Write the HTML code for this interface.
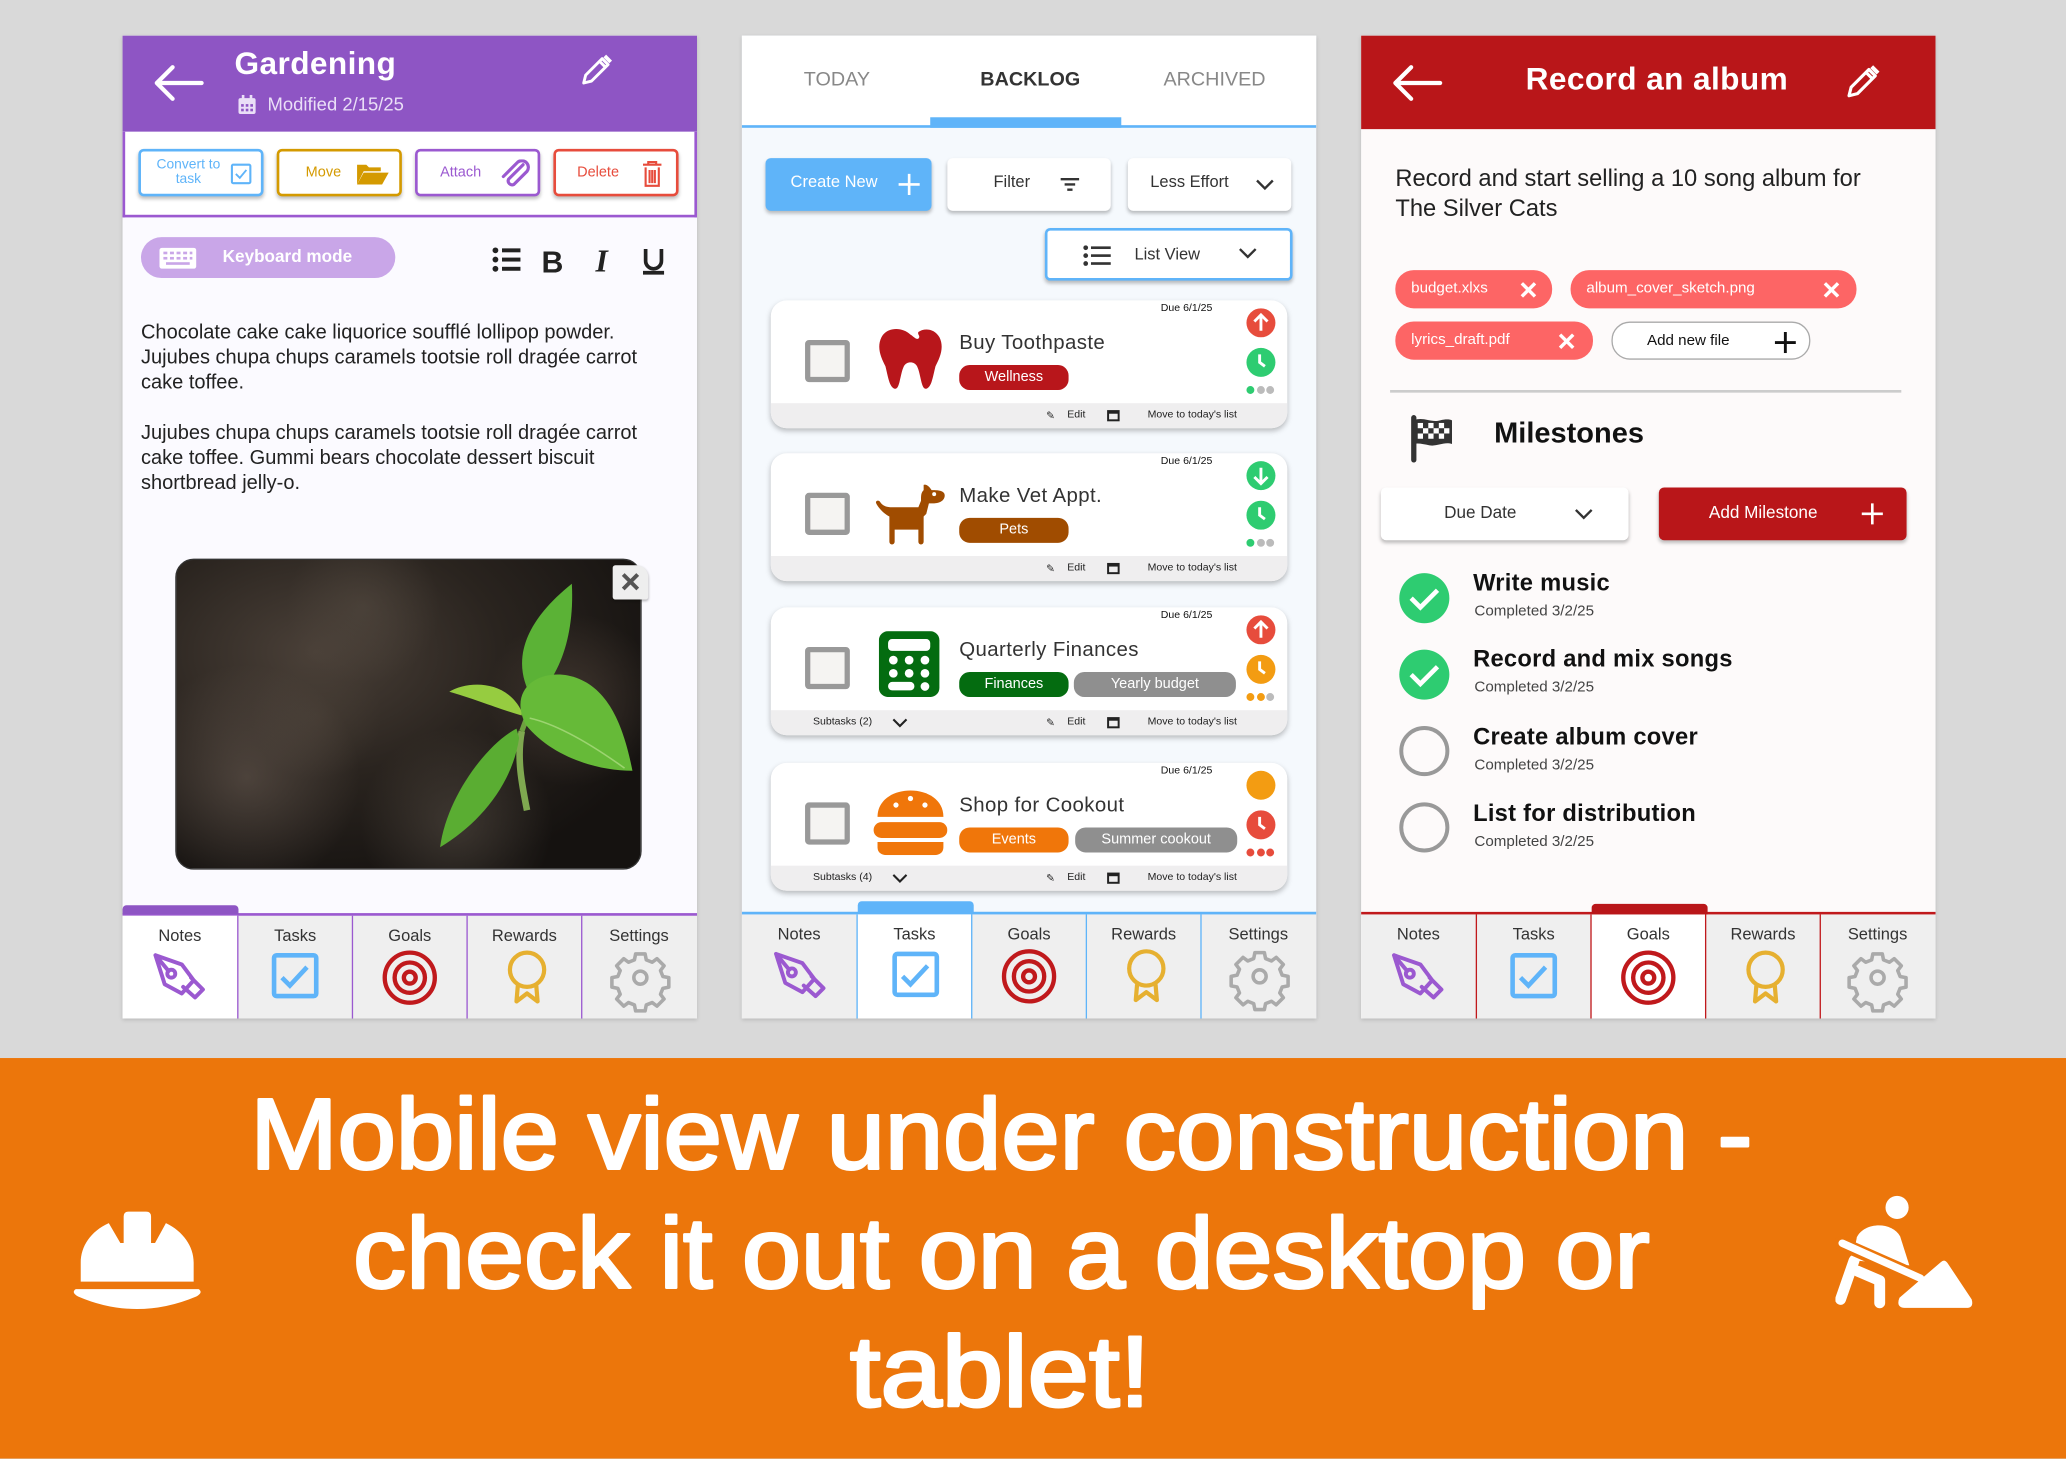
<!DOCTYPE html>
<html><head><meta charset="utf-8">
<style>
*{margin:0;padding:0;box-sizing:border-box}
html,body{width:2066px;height:1458px;overflow:hidden;background:#d9d9d9;font-family:"Liberation Sans",sans-serif}
#w{position:absolute;left:0;top:0;width:1568px;height:1107px;transform:scale(1.317602);transform-origin:0 0;background:#d9d9d9}
.a{position:absolute}
.panel{position:absolute;top:27px;width:436px;height:746px;overflow:hidden;box-shadow:0 1px 3px rgba(0,0,0,.15)}
.nav{position:absolute;left:0;top:666px;width:436px;height:80px;background:#efefef}
.tab{position:absolute;top:0;width:87px;height:80px;text-align:center;font-size:12.5px;color:#333}
.tab span{position:absolute;top:8px;left:0;width:100%}
.btn{position:absolute;background:#fff;border-radius:4px;box-shadow:0 2px 3px rgba(0,0,0,.25);font-size:12.5px;color:#333}
.card{position:absolute;left:22px;width:392px;height:97px;background:#fff;border-radius:12px;box-shadow:0 2px 4px rgba(0,0,0,.25);overflow:hidden}
.card .ft{position:absolute;left:0;top:78px;width:100%;height:19px;background:#efeeef;font-size:8px;color:#222}
.cb{position:absolute;left:26px;top:30px;width:34px;height:32px;border:4px solid #999;border-radius:3px;background:#f5f4f2}
.ttl{position:absolute;left:143px;top:24px;font-size:15.5px;color:#333;letter-spacing:.3px}
.tag{position:absolute;top:49px;height:19px;border-radius:8px;color:#fff;font-size:11px;text-align:center;line-height:19px}
.due{position:absolute;left:296px;top:1px;font-size:8px;color:#111}
.dots{position:absolute;left:361px;top:58px}
.dots i{display:inline-block;width:6px;height:6px;border-radius:50%;margin-right:1.5px}
.chip{position:absolute;height:29px;border-radius:14px;background:#fd6565;color:#fff;font-size:11.5px;line-height:28px;padding-left:12px}
.ms{position:absolute;left:1118px;font-size:18px;color:#111;font-weight:bold;letter-spacing:.2px}
.msd{position:absolute;left:1119px;font-size:11.5px;color:#444}
</style></head><body><div id="w">

<!-- ============ PANEL 1 ============ -->
<div class="panel" style="left:93px;background:#fbfaff">
  <div class="a" style="left:0;top:0;width:436px;height:73px;background:#8e55c4"></div>
  <svg class="a" style="left:22px;top:20px" width="40" height="32" viewBox="0 0 40 32"><path d="M38 16H4M16 4L4 16L16 28" fill="none" stroke="#fff" stroke-width="3.2" stroke-linecap="round" stroke-linejoin="round"/></svg>
  <div class="a" style="left:85px;top:8px;font-size:24px;color:#fff;font-weight:bold;letter-spacing:.3px">Gardening</div>
  <svg class="a" style="left:87px;top:45px" width="15" height="15" viewBox="0 0 15 15"><rect x="1" y="2.5" width="13" height="12" rx="1.5" fill="#eadff7"/><rect x="3.5" y="0" width="2" height="4" fill="#eadff7"/><rect x="9.5" y="0" width="2" height="4" fill="#eadff7"/><g fill="#8e55c4"><rect x="3" y="7" width="2" height="2"/><rect x="6.5" y="7" width="2" height="2"/><rect x="10" y="7" width="2" height="2"/><rect x="3" y="10.5" width="2" height="2"/><rect x="6.5" y="10.5" width="2" height="2"/><rect x="10" y="10.5" width="2" height="2"/></g></svg>
  <div class="a" style="left:110px;top:44px;font-size:14px;color:#eadff7">Modified 2/15/25</div>
  <svg class="a" style="left:346px;top:14px" width="26" height="26" viewBox="0 0 26 26"><path d="M4 22L5.5 16L18 3.5L22.5 8L10 20.5Z M16 5.5L20.5 10" fill="none" stroke="#fff" stroke-width="2.2" stroke-linejoin="round"/><path d="M19 2.5L21 .5L25.5 5L23.5 7Z" fill="#fff"/></svg>
  <div class="a" style="left:0;top:73px;width:436px;height:65px;background:#fff;border:2px solid #9b59d0;border-top:none"></div>
  <div class="btn" style="left:12px;top:86px;width:95px;height:36px;border:2px solid #5fb4f9;color:#5fb4f9;font-size:10.5px;line-height:11px"><div class="a" style="left:6px;top:5px;width:60px;text-align:center">Convert to<br>task</div><svg class="a" style="left:68px;top:9px" width="16" height="16"><rect x="1" y="1" width="14" height="14" rx="1" fill="none" stroke="#5fb4f9" stroke-width="1.6"/><path d="M4 8l3 3 5-6" fill="none" stroke="#5fb4f9" stroke-width="1.4"/></svg></div>
  <div class="btn" style="left:117px;top:86px;width:95px;height:36px;border:2px solid #d49a00;color:#d49a00;font-size:11px"><div class="a" style="left:20px;top:10px">Move</div><svg class="a" style="left:58px;top:8px" width="26" height="18" viewBox="0 0 26 18"><path d="M1 2h7l2 2h9v3H6L1 17Z" fill="#d49a00"/><path d="M6 8h19l-5 9H1Z" fill="#d49a00"/></svg></div>
  <div class="btn" style="left:222px;top:86px;width:95px;height:36px;border:2px solid #9b59d0;color:#9b59d0;font-size:11px"><div class="a" style="left:17px;top:10px">Attach</div><svg class="a" style="left:62px;top:6px" width="24" height="22" viewBox="0 0 24 22"><path d="M18 4L7 15a3 3 0 0 0 4 4L21 9a5 5 0 0 0-7-7L3 13" fill="none" stroke="#9b59d0" stroke-width="2.4" stroke-linecap="round"/></svg></div>
  <div class="btn" style="left:327px;top:86px;width:95px;height:36px;border:2px solid #e74c3c;color:#e74c3c;font-size:11px"><div class="a" style="left:16px;top:10px">Delete</div><svg class="a" style="left:65px;top:7px" width="16" height="20" viewBox="0 0 16 20"><path d="M1 3h14M5 3V1h6v2M3 5v14h10V5M6 7v10M8 7v10M10 7v10" fill="none" stroke="#e74c3c" stroke-width="1.6"/></svg></div>
  <div class="a" style="left:14px;top:153px;width:193px;height:31px;border-radius:16px;background:#c9a6e8"></div>
  <svg class="a" style="left:28px;top:161px" width="28" height="16" viewBox="0 0 28 16"><rect x="0" y="0" width="28" height="16" rx="2" fill="#fff"/><g fill="#c9a6e8"><rect x="3" y="3" width="3" height="2"/><rect x="8" y="3" width="3" height="2"/><rect x="13" y="3" width="3" height="2"/><rect x="18" y="3" width="3" height="2"/><rect x="23" y="3" width="2" height="2"/><rect x="3" y="7" width="3" height="2"/><rect x="8" y="7" width="3" height="2"/><rect x="13" y="7" width="3" height="2"/><rect x="18" y="7" width="3" height="2"/><rect x="23" y="7" width="2" height="2"/><rect x="5" y="11" width="18" height="2"/></g></svg>
  <div class="a" style="left:76px;top:160px;font-size:13px;color:#fff;font-weight:bold">Keyboard mode</div>
  <svg class="a" style="left:280px;top:158px" width="136" height="24" viewBox="0 0 136 24"><g fill="#222"><circle cx="3" cy="5" r="2.2"/><circle cx="3" cy="12" r="2.2"/><circle cx="3" cy="19" r="2.2"/><rect x="8" y="3.5" width="14" height="3"/><rect x="8" y="10.5" width="14" height="3"/><rect x="8" y="17.5" width="14" height="3"/></g><text x="38" y="22" font-family="Liberation Sans" font-weight="bold" font-size="23" fill="#222">B</text><text x="79" y="21" font-family="Liberation Serif" font-style="italic" font-weight="bold" font-size="24" fill="#222">I</text><path d="M117 4v9a6 6 0 0 0 12 0V4M115 22h16" fill="none" stroke="#222" stroke-width="2.8"/></svg>
  <div class="a" style="left:14px;top:216px;width:410px;font-size:15.2px;line-height:19px;color:#222">Chocolate cake cake liquorice soufflé lollipop powder. Jujubes chupa chups caramels tootsie roll dragée carrot cake toffee.<br><br>Jujubes chupa chups caramels tootsie roll dragée carrot cake toffee. Gummi bears chocolate dessert biscuit shortbread jelly-o.</div>
  <div class="a" style="left:40px;top:397px;width:354px;height:236px;border-radius:14px;overflow:hidden;border:1px solid #333;background:radial-gradient(ellipse at 30% 30%,#4a4038 0%,#2a241f 40%,#151210 80%);">
    <div class="a" style="left:0;top:0;width:354px;height:236px;background:radial-gradient(circle at 15% 70%,rgba(120,105,95,.45) 0,transparent 25%),radial-gradient(circle at 60% 85%,rgba(100,90,80,.45) 0,transparent 25%),radial-gradient(circle at 85% 45%,rgba(90,75,65,.5) 0,transparent 20%),radial-gradient(circle at 40% 15%,rgba(90,80,70,.45) 0,transparent 20%),radial-gradient(circle at 30% 50%,rgba(80,70,60,.4) 0,transparent 18%)"></div>
    <svg class="a" style="left:0;top:0" width="354" height="236" viewBox="0 0 354 236">
      <path d="M262 130 C258 150 262 170 266 190" stroke="#7fa850" stroke-width="5" fill="none"/>
      <path d="M262 130 L275 95" stroke="#6ea040" stroke-width="4" fill="none"/>
      <path d="M270 105 C255 80 260 50 300 18 C302 55 292 85 275 102Z" fill="#5bb236"/>
      <path d="M258 128 C235 140 205 180 200 218 C230 200 255 170 260 135Z" fill="#5aad32"/>
      <path d="M262 118 C250 115 225 105 207 100 C220 92 250 90 262 115Z" fill="#96cc40"/>
      <path d="M265 125 C250 95 280 80 305 90 C330 100 340 130 346 160 C320 160 285 150 265 125Z" fill="#66ba38"/>
      <path d="M268 120 C290 125 315 140 340 158" stroke="#9cd470" stroke-width="1.2" fill="none"/>
    </svg>
  </div>
  <div class="a" style="left:372px;top:402px;width:27px;height:26px;background:#eee;border-radius:2px 9px 2px 2px;box-shadow:0 1px 2px rgba(0,0,0,.3)"><svg width="27" height="26"><path d="M8 7l11 11M19 7L8 18" stroke="#555" stroke-width="3"/></svg></div>
  <div class="nav" style="border-top:2px solid #9b59d0">
    <div class="tab" style="left:0;background:#fff"><span>Notes</span></div>
    <div class="tab" style="left:87px;border-left:1.5px solid #9b59d0"><span>Tasks</span></div>
    <div class="tab" style="left:174px;border-left:1.5px solid #9b59d0"><span>Goals</span></div>
    <div class="tab" style="left:261px;border-left:1.5px solid #9b59d0"><span>Rewards</span></div>
    <div class="tab" style="left:348px;border-left:1.5px solid #9b59d0"><span>Settings</span></div>
  </div>
  <div class="a" style="left:0;top:660px;width:88px;height:7px;background:#8e55c4;border-radius:3px 3px 0 0"></div>
</div>

<!-- ============ PANEL 2 ============ -->
<div class="panel" style="left:563px;background:#f5f9fd">
  <div class="a" style="left:0;top:0;width:436px;height:70px;background:#fff;border-bottom:2px solid #5fb4f9"></div>
  <div class="a" style="left:143px;top:62px;width:145px;height:8px;background:#5fb4f9"></div>
  <div class="a" style="left:47px;top:25px;font-size:15px;color:#888">TODAY</div>
  <div class="a" style="left:181px;top:25px;font-size:15px;color:#333;font-weight:bold">BACKLOG</div>
  <div class="a" style="left:320px;top:25px;font-size:15px;color:#888">ARCHIVED</div>
  <div class="btn" style="left:18px;top:93px;width:126px;height:40px;background:#5fb4f9;color:#fff"><div class="a" style="left:19px;top:11px">Create New</div><svg class="a" style="left:100px;top:11px" width="18" height="18"><path d="M9 1v16M1 9h16" stroke="#fff" stroke-width="2"/></svg></div>
  <div class="btn" style="left:156px;top:93px;width:124px;height:40px"><div class="a" style="left:35px;top:11px">Filter</div><svg class="a" style="left:85px;top:14px" width="16" height="12"><path d="M1 2h14M4 6h8M6 10h4" stroke="#333" stroke-width="1.8"/></svg></div>
  <div class="btn" style="left:293px;top:93px;width:124px;height:40px"><div class="a" style="left:17px;top:11px">Less Effort</div><svg class="a" style="left:96px;top:14px" width="16" height="12"><path d="M2 3l6 6 6-6" fill="none" stroke="#333" stroke-width="1.8"/></svg></div>
  <div class="btn" style="left:230px;top:146px;width:188px;height:40px;border:2px solid #5fb4f9"><svg class="a" style="left:27px;top:11px" width="22" height="16"><g fill="#333"><circle cx="2" cy="2" r="1.8"/><circle cx="2" cy="8" r="1.8"/><circle cx="2" cy="14" r="1.8"/><rect x="6" y="1" width="15" height="2"/><rect x="6" y="7" width="15" height="2"/><rect x="6" y="13" width="15" height="2"/></g></svg><div class="a" style="left:66px;top:11px">List View</div><svg class="a" style="left:144px;top:11px" width="16" height="12"><path d="M2 3l6 6 6-6" fill="none" stroke="#333" stroke-width="1.8"/></svg></div>

  <div class="card" style="top:201px">
    <div class="cb"></div>
    <svg class="a" style="left:80px;top:20px" width="52" height="50" viewBox="0 0 52 50"><path d="M26 6C20 0 8 0 4 8C0 16 4 24 7 30C9 38 10 46 14 47C18 48 18 36 21 30C23 26 29 26 31 30C34 36 34 48 38 47C42 46 43 38 45 30C48 24 52 16 48 8C44 1 36 1 32 4C31 6 34 7 32 9C30 10 28 7 26 6Z" fill="#b8161b"/></svg>
    <div class="ttl">Buy Toothpaste</div>
    <div class="tag" style="left:143px;width:83px;background:#b8161b">Wellness</div>
    <div class="due">Due 6/1/25</div>
    <svg class="a" style="left:360px;top:5px" width="24" height="56"><circle cx="12" cy="12" r="11" fill="#e74c3c"/><path d="M12 18V6M7 11l5-5 5 5" fill="none" stroke="#fff" stroke-width="2.2"/><circle cx="12" cy="42" r="11" fill="#2ecc71"/><path d="M11 36v6l4 3" fill="none" stroke="#fff" stroke-width="2.2"/></svg>
    <div class="dots"><i style="background:#2ecc71"></i><i style="background:#bbb"></i><i style="background:#bbb"></i></div>
    <div class="ft"><div class="a" style="left:209px;top:5px">✎</div><div class="a" style="left:225px;top:4px">Edit</div><svg class="a" style="left:255px;top:4px" width="10" height="10"><rect x="1" y="2" width="8" height="7" fill="none" stroke="#222" stroke-width="1.5"/><rect x="1" y="2" width="8" height="2" fill="#222"/></svg><div class="a" style="left:286px;top:4px">Move to today's list</div></div>
  </div>
  <div class="card" style="top:317px">
    <div class="cb"></div>
    <svg class="a" style="left:78px;top:22px" width="56" height="50" viewBox="0 0 56 50"><path d="M38 6L38 2C40 1 43 4 44 6C48 6 54 6 54 10C54 14 50 16 46 16L42 16L40 24L38 26L38 45C38 48 34 48 34 45L34 36L16 36L16 45C16 48 12 48 12 45L12 26C8 24 4 20 2 16C1 14 4 13 5 15C7 18 10 19 14 19L34 19L36 14C36 10 36 8 38 6Z" fill="#a04c00"/><circle cx="46" cy="9" r="1.5" fill="#fff"/></svg>
    <div class="ttl">Make Vet Appt.</div>
    <div class="tag" style="left:143px;width:83px;background:#a04c00">Pets</div>
    <div class="due">Due 6/1/25</div>
    <svg class="a" style="left:360px;top:5px" width="24" height="56"><circle cx="12" cy="12" r="11" fill="#2ecc71"/><path d="M12 6v12M7 13l5 5 5-5" fill="none" stroke="#fff" stroke-width="2.2"/><circle cx="12" cy="42" r="11" fill="#2ecc71"/><path d="M11 36v6l4 3" fill="none" stroke="#fff" stroke-width="2.2"/></svg>
    <div class="dots"><i style="background:#2ecc71"></i><i style="background:#bbb"></i><i style="background:#bbb"></i></div>
    <div class="ft"><div class="a" style="left:209px;top:5px">✎</div><div class="a" style="left:225px;top:4px">Edit</div><svg class="a" style="left:255px;top:4px" width="10" height="10"><rect x="1" y="2" width="8" height="7" fill="none" stroke="#222" stroke-width="1.5"/><rect x="1" y="2" width="8" height="2" fill="#222"/></svg><div class="a" style="left:286px;top:4px">Move to today's list</div></div>
  </div>
  <div class="card" style="top:434px">
    <div class="cb"></div>
    <svg class="a" style="left:82px;top:18px" width="46" height="50" viewBox="0 0 46 50"><rect x="0" y="0" width="46" height="50" rx="7" fill="#046c10"/><rect x="7" y="6" width="32" height="9" rx="3" fill="#fff"/><g fill="#fff"><circle cx="11" cy="22" r="3.3"/><circle cx="23" cy="22" r="3.3"/><circle cx="35" cy="22" r="3.3"/><circle cx="11" cy="32" r="3.3"/><circle cx="23" cy="32" r="3.3"/><circle cx="35" cy="32" r="3.3"/><rect x="7" y="38.5" width="20" height="6.5" rx="3.2"/><circle cx="35" cy="42" r="3.3"/></g></svg>
    <div class="ttl">Quarterly Finances</div>
    <div class="tag" style="left:143px;width:83px;background:#046c10">Finances</div>
    <div class="tag" style="left:230px;width:123px;background:#8f8f8f">Yearly budget</div>
    <div class="due">Due 6/1/25</div>
    <svg class="a" style="left:360px;top:5px" width="24" height="56"><circle cx="12" cy="12" r="11" fill="#e74c3c"/><path d="M12 18V6M7 11l5-5 5 5" fill="none" stroke="#fff" stroke-width="2.2"/><circle cx="12" cy="42" r="11" fill="#f39c12"/><path d="M11 36v6l4 3" fill="none" stroke="#fff" stroke-width="2.2"/></svg>
    <div class="dots"><i style="background:#f39c12"></i><i style="background:#f39c12"></i><i style="background:#bbb"></i></div>
    <div class="ft"><div class="a" style="left:32px;top:4px">Subtasks (2)</div><svg class="a" style="left:92px;top:5px" width="12" height="10"><path d="M1 2l5 5 5-5" fill="none" stroke="#222" stroke-width="1.6"/></svg><div class="a" style="left:209px;top:5px">✎</div><div class="a" style="left:225px;top:4px">Edit</div><svg class="a" style="left:255px;top:4px" width="10" height="10"><rect x="1" y="2" width="8" height="7" fill="none" stroke="#222" stroke-width="1.5"/><rect x="1" y="2" width="8" height="2" fill="#222"/></svg><div class="a" style="left:286px;top:4px">Move to today's list</div></div>
  </div>
  <div class="card" style="top:552px">
    <div class="cb"></div>
    <svg class="a" style="left:78px;top:20px" width="56" height="50" viewBox="0 0 56 50"><path d="M3 21C3 8 15 1 28 1C41 1 53 8 53 21Z" fill="#f0760a"/><g fill="#fff"><circle cx="17" cy="12" r="2"/><circle cx="28" cy="7" r="2"/><circle cx="39" cy="12" r="2"/></g><rect x="0" y="25" width="56" height="12" rx="6" fill="#f0760a"/><path d="M3 40H53V44C53 48 50 50 46 50H10C6 50 3 48 3 44Z" fill="#f0760a"/></svg>
    <div class="ttl">Shop for Cookout</div>
    <div class="tag" style="left:143px;width:83px;background:#f0760a">Events</div>
    <div class="tag" style="left:231px;width:123px;background:#8f8f8f">Summer cookout</div>
    <div class="due">Due 6/1/25</div>
    <svg class="a" style="left:360px;top:5px" width="24" height="56"><circle cx="12" cy="12" r="11" fill="#f39c12"/><circle cx="12" cy="42" r="11" fill="#e74c3c"/><path d="M11 36v6l4 3" fill="none" stroke="#fff" stroke-width="2.2"/></svg>
    <div class="dots"><i style="background:#e74c3c"></i><i style="background:#e74c3c"></i><i style="background:#e74c3c"></i></div>
    <div class="ft"><div class="a" style="left:32px;top:4px">Subtasks (4)</div><svg class="a" style="left:92px;top:5px" width="12" height="10"><path d="M1 2l5 5 5-5" fill="none" stroke="#222" stroke-width="1.6"/></svg><div class="a" style="left:209px;top:5px">✎</div><div class="a" style="left:225px;top:4px">Edit</div><svg class="a" style="left:255px;top:4px" width="10" height="10"><rect x="1" y="2" width="8" height="7" fill="none" stroke="#222" stroke-width="1.5"/><rect x="1" y="2" width="8" height="2" fill="#222"/></svg><div class="a" style="left:286px;top:4px">Move to today's list</div></div>
  </div>
  <div class="nav" style="top:665px;height:81px;border-top:2px solid #5fb4f9">
    <div class="tab" style="left:0"><span>Notes</span></div>
    <div class="tab" style="left:87px;background:#fff;border-left:1.5px solid #5fb4f9"><span>Tasks</span></div>
    <div class="tab" style="left:174px;border-left:1.5px solid #5fb4f9"><span>Goals</span></div>
    <div class="tab" style="left:261px;border-left:1.5px solid #5fb4f9"><span>Rewards</span></div>
    <div class="tab" style="left:348px;border-left:1.5px solid #5fb4f9"><span>Settings</span></div>
  </div>
  <div class="a" style="left:88px;top:657px;width:88px;height:9px;background:#5fb4f9;border-radius:3px 3px 0 0"></div>
</div>

<!-- ============ PANEL 3 ============ -->
<div class="panel" style="left:1033px;background:#fdfafa">
  <div class="a" style="left:0;top:0;width:436px;height:71px;background:#b91619"></div>
  <svg class="a" style="left:22px;top:20px" width="40" height="32" viewBox="0 0 40 32"><path d="M38 16H4M16 4L4 16L16 28" fill="none" stroke="#fff" stroke-width="3.2" stroke-linecap="round" stroke-linejoin="round"/></svg>
  <div class="a" style="left:0;top:20px;width:449px;text-align:center;font-size:24px;color:#fff;font-weight:bold;letter-spacing:.3px">Record an album</div>
  <svg class="a" style="left:366px;top:22px" width="28" height="28" viewBox="0 0 26 26"><path d="M4 22L5.5 16L18 3.5L22.5 8L10 20.5Z M16 5.5L20.5 10" fill="none" stroke="#fff" stroke-width="2.2" stroke-linejoin="round"/><path d="M19 2.5L21 .5L25.5 5L23.5 7Z" fill="#fff"/></svg>
  <div class="a" style="left:26px;top:97px;width:375px;font-size:18px;line-height:23px;color:#222">Record and start selling a 10 song album for The Silver Cats</div>
  <div class="chip" style="left:26px;top:178px;width:119px">budget.xlxs<svg class="a" style="left:95px;top:9px" width="12" height="12"><path d="M1 1l10 10M11 1L1 11" stroke="#fff" stroke-width="2.6"/></svg></div>
  <div class="chip" style="left:159px;top:178px;width:217px">album_cover_sketch.png<svg class="a" style="left:192px;top:9px" width="12" height="12"><path d="M1 1l10 10M11 1L1 11" stroke="#fff" stroke-width="2.6"/></svg></div>
  <div class="chip" style="left:26px;top:217px;width:150px">lyrics_draft.pdf<svg class="a" style="left:124px;top:9px" width="12" height="12"><path d="M1 1l10 10M11 1L1 11" stroke="#fff" stroke-width="2.6"/></svg></div>
  <div class="chip" style="left:190px;top:217px;width:151px;background:#fff;border:1px solid #aaa;color:#111;padding-left:26px">Add new file<svg class="a" style="left:123px;top:7px" width="16" height="16"><path d="M8 0v16M0 8h16" stroke="#111" stroke-width="2.2"/></svg></div>
  <div class="a" style="left:22px;top:269px;width:388px;height:1.5px;background:#ccc"></div>
  <svg class="a" style="left:37px;top:288px" width="34" height="36" viewBox="0 0 34 36"><path d="M3 2v32" stroke="#333" stroke-width="4" stroke-linecap="round"/><path d="M3 4C10 1 16 6 23 4C27 3 30 3 32 4V22C26 20 21 24 15 23C10 22 6 21 3 22Z" fill="#333"/><g fill="#fff"><rect x="6" y="6" width="4" height="4"/><rect x="14" y="6" width="4" height="4"/><rect x="22" y="6" width="4" height="4"/><rect x="10" y="10" width="4" height="4"/><rect x="18" y="10" width="4" height="4"/><rect x="26" y="10" width="4" height="4"/><rect x="6" y="14" width="4" height="4"/><rect x="14" y="14" width="4" height="4"/><rect x="22" y="14" width="4" height="4"/></g></svg>
  <div class="a" style="left:101px;top:289px;font-size:22px;font-weight:bold;color:#111">Milestones</div>
  <div class="btn" style="left:15px;top:343px;width:188px;height:40px;font-size:13px"><div class="a" style="left:48px;top:11px">Due Date</div><svg class="a" style="left:146px;top:14px" width="16" height="12"><path d="M2 3l6 6 6-6" fill="none" stroke="#333" stroke-width="1.8"/></svg></div>
  <div class="btn" style="left:226px;top:343px;width:188px;height:40px;background:#b91619;color:#fff;font-size:13px"><div class="a" style="left:38px;top:11px">Add Milestone</div><svg class="a" style="left:153px;top:11px" width="18" height="18"><path d="M9 1v16M1 9h16" stroke="#fff" stroke-width="2"/></svg></div>
</div>
<svg class="a" style="left:1060px;top:434px" width="42" height="216" viewBox="0 0 42 216"><circle cx="21" cy="20" r="19" fill="#2ecc71"/><path d="M11 20l7 7 13-13" fill="none" stroke="#fff" stroke-width="3.5"/><circle cx="21" cy="78" r="19" fill="#2ecc71"/><path d="M11 78l7 7 13-13" fill="none" stroke="#fff" stroke-width="3.5"/><circle cx="21" cy="136" r="17.5" fill="none" stroke="#999" stroke-width="3"/><circle cx="21" cy="194" r="17.5" fill="none" stroke="#999" stroke-width="3"/></svg>
<div class="ms" style="top:432px">Write music</div><div class="msd" style="top:458px">Completed 3/2/25</div>
<div class="ms" style="top:490px">Record and mix songs</div><div class="msd" style="top:516px">Completed 3/2/25</div>
<div class="ms" style="top:549px">Create album cover</div><div class="msd" style="top:575px">Completed 3/2/25</div>
<div class="ms" style="top:607px">List for distribution</div><div class="msd" style="top:633px">Completed 3/2/25</div>
<div class="panel" style="left:1033px;top:692px;height:81px;background:none;box-shadow:none">
  <div class="nav" style="top:0;height:81px;border-top:2px solid #c0191c">
    <div class="tab" style="left:0"><span>Notes</span></div>
    <div class="tab" style="left:87px;border-left:1.5px solid #c0191c"><span>Tasks</span></div>
    <div class="tab" style="left:174px;background:#fff;border-left:1.5px solid #c0191c"><span>Goals</span></div>
    <div class="tab" style="left:261px;border-left:1.5px solid #c0191c"><span>Rewards</span></div>
    <div class="tab" style="left:348px;border-left:1.5px solid #c0191c"><span>Settings</span></div>
  </div>
</div>
<div class="a" style="left:1208px;top:686px;width:88px;height:8px;background:#b91619;border-radius:3px 3px 0 0"></div>

<svg class="a" style="left:0;top:0;pointer-events:none" width="1568" height="800">
  <g fill="none" stroke="#9b59d0" stroke-width="3" stroke-linejoin="round" stroke-linecap="round">
   <path d="M118 725L138 732L147 744L138 754L125 747Z M118 725L128 737 M145 742L154 751L148 757L139 749"/><circle cx="130" cy="739" r="3"/>
   <path d="M589 724L609 731L618 743L609 753L596 746Z M589 724L599 736 M616 741L625 750L619 756L610 748"/><circle cx="601" cy="738" r="3"/>
   <path d="M1058 725L1078 732L1087 744L1078 754L1065 747Z M1058 725L1068 737 M1085 742L1094 751L1088 757L1079 749"/><circle cx="1070" cy="739" r="3"/>
  </g>
  <g fill="none" stroke="#5fb4f9" stroke-width="3.5">
   <rect x="208" y="725" width="32" height="31" rx="2"/><path d="M214 742l6 6 13-14"/>
   <rect x="679" y="724" width="32" height="31" rx="2"/><path d="M685 741l6 6 13-14"/>
   <rect x="1148" y="725" width="32" height="31" rx="2"/><path d="M1154 742l6 6 13-14"/>
  </g>
  <g fill="none" stroke="#c0191c" stroke-width="3.3">
   <circle cx="311" cy="742" r="19"/><circle cx="311" cy="742" r="11.5"/><circle cx="311" cy="742" r="4.5"/>
   <circle cx="781" cy="741" r="19"/><circle cx="781" cy="741" r="11.5"/><circle cx="781" cy="741" r="4.5"/>
   <circle cx="1251" cy="742" r="19"/><circle cx="1251" cy="742" r="11.5"/><circle cx="1251" cy="742" r="4.5"/>
  </g>
  <g fill="none" stroke="#e6b030" stroke-width="3.2" stroke-linejoin="round">
   <circle cx="400" cy="736" r="13"/><path d="M393 748L392 760L400 754L408 760L407 748"/>
   <circle cx="870" cy="735" r="13"/><path d="M863 747L862 759L870 753L878 759L877 747"/>
   <circle cx="1340" cy="736" r="13"/><path d="M1333 748L1332 760L1340 754L1348 760L1347 748"/>
  </g>
  <g fill="none" stroke="#aaa" stroke-width="3" stroke-linejoin="round">
   <g transform="translate(486 742) scale(.9)"><path d="M-4-20h8l1 5 5 2 4-3 6 6-3 4 2 5 5 1v8l-5 1-2 5 3 4-6 6-4-3-5 2-1 5h-8l-1-5-5-2-4 3-6-6 3-4-2-5-5-1v-8l5-1 2-5-3-4 6-6 4 3 5-2z"/><circle r="5.5"/></g>
   <g transform="translate(956 741) scale(.9)"><path d="M-4-20h8l1 5 5 2 4-3 6 6-3 4 2 5 5 1v8l-5 1-2 5 3 4-6 6-4-3-5 2-1 5h-8l-1-5-5-2-4 3-6-6 3-4-2-5-5-1v-8l5-1 2-5-3-4 6-6 4 3 5-2z"/><circle r="5.5"/></g>
   <g transform="translate(1425 742) scale(.9)"><path d="M-4-20h8l1 5 5 2 4-3 6 6-3 4 2 5 5 1v8l-5 1-2 5 3 4-6 6-4-3-5 2-1 5h-8l-1-5-5-2-4 3-6-6 3-4-2-5-5-1v-8l5-1 2-5-3-4 6-6 4 3 5-2z"/><circle r="5.5"/></g>
  </g>
</svg>

<div class="a" style="left:0;top:803px;width:1568px;height:304px;background:#ec760b"></div>
<svg class="a" style="left:0;top:803px" width="1568" height="304" viewBox="0 803 1568 304">
  <g font-family="Liberation Sans, sans-serif" font-size="76" fill="#fff" stroke="#fff" stroke-width="2.2" stroke-linejoin="round">
    <text x="190" y="887" textLength="1140" lengthAdjust="spacingAndGlyphs">Mobile view under construction -</text>
    <text x="268" y="977" textLength="984" lengthAdjust="spacingAndGlyphs">check it out on a desktop or</text>
    <text x="645" y="1067" textLength="228" lengthAdjust="spacingAndGlyphs">tablet!</text>
  </g>
</svg>
<svg class="a" style="left:55px;top:918px" width="99" height="77" viewBox="95 140 395 305"><path d="M120 357L120 300C120 250 150 205 205 180L240 240L250 240L250 160Q250 145 265 145L318 145Q333 145 333 160L333 240L345 240L378 180C430 205 462 250 462 300L462 357Z" fill="#fff"/><path d="M105 380L477 380Q492 390 470 402Q380 440 290 440Q200 440 112 402Q90 390 105 380Z" fill="#fff"/></svg>
<svg class="a" style="left:1393px;top:906px" width="106" height="88" viewBox="55 45 410 340"><circle cx="236" cy="85" r="34" fill="#fff"/><path d="M105 240L118 172C140 128 220 125 245 170L272 255Z" fill="#fff"/><path d="M110 240L70 355M120 272L185 300L185 365" stroke="#fff" stroke-width="32" stroke-linecap="round" stroke-linejoin="round" fill="none"/><path d="M70 190L310 296" stroke="#ec760b" stroke-width="40" stroke-linecap="round"/><path d="M75 190L305 293" stroke="#fff" stroke-width="22" stroke-linecap="round"/><path d="M243 350L365 245Q375 236 384 248L455 355Q462 380 440 380L258 380Q232 378 243 350Z" fill="#fff"/></svg>

</div></body></html>
